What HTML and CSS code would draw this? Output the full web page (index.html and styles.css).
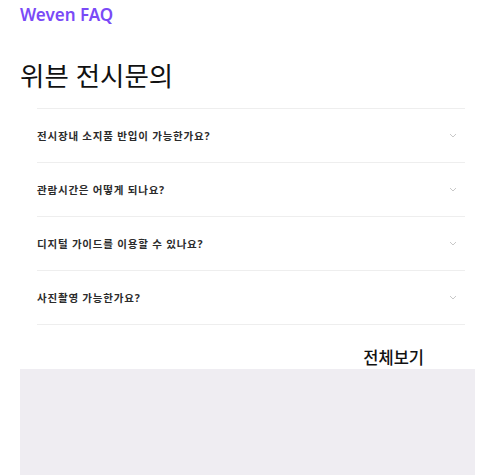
FILE: index.html
```html
<!DOCTYPE html>
<html lang="ko">

<head>
  <meta charset="UTF-8">
  <meta name="viewport" content="width=device-width, initial-scale=1.0">
  <title>Weven FAQ</title>

  <link rel="stylesheet" href="styles.css">
</head>

<body>
  <div class="page">
    <div class="brand">Weven FAQ</div>
    <h1 class="title">위븐 전시문의</h1>

    <ul class="faq-list">
      <li class="faq-item">
        <span>전시장내 소지품 반입이 가능한가요?</span>
        <svg class="chev" width="8" height="5" viewBox="0 0 8 5"><path d="M1 1l3 3 3-3" fill="none" stroke="#c8c8c8" stroke-width="1"/></svg>
      </li>
      <li class="faq-item">
        <span>관람시간은 어떻게 되나요?</span>
        <svg class="chev" width="8" height="5" viewBox="0 0 8 5"><path d="M1 1l3 3 3-3" fill="none" stroke="#c8c8c8" stroke-width="1"/></svg>
      </li>
      <li class="faq-item">
        <span>디지털 가이드를 이용할 수 있나요?</span>
        <svg class="chev" width="8" height="5" viewBox="0 0 8 5"><path d="M1 1l3 3 3-3" fill="none" stroke="#c8c8c8" stroke-width="1"/></svg>
      </li>
      <li class="faq-item">
        <span>사진촬영 가능한가요?</span>
        <svg class="chev" width="8" height="5" viewBox="0 0 8 5"><path d="M1 1l3 3 3-3" fill="none" stroke="#c8c8c8" stroke-width="1"/></svg>
      </li>
    </ul>

    <div class="more">
      <a href="#">전체보기</a>
    </div>

    <div class="panel"></div>
  </div>
</body>

</html>
```

FILE: styles.css
```css
body {
  margin: 0;
  font-family: "Noto Sans", "Noto Sans CJK KR", sans-serif;
  background: #fff;
}

.page {
  padding: 0 20px;
}

.brand {
  color: #7a4af7;
  font-size: 17px;
  font-weight: 600;
  line-height: 20px;
  padding-top: 5px;
}

.title {
  margin: 36px 0 0;
  font-size: 26.5px;
  font-weight: 400;
  line-height: 30px;
  color: #111;
}

.faq-list {
  list-style: none;
  margin: 17px 10px 0 17px;
  padding: 0;
  border-top: 1px solid #eeeeee;
}

.faq-item {
  display: flex;
  align-items: center;
  justify-content: space-between;
  height: 53px;
  border-bottom: 1px solid #eeeeee;
  font-size: 10.5px;
  letter-spacing: 0.8px;
  font-weight: 700;
  color: #2b2b2b;
}

.chev {
  margin-right: 8px;
}

.more {
  display: flex;
  justify-content: flex-end;
  padding: 22px 51px 0 0;
}

.more a {
  color: #111;
  text-decoration: none;
  font-size: 16.5px;
  font-weight: 500;
  line-height: 22px;
}

.panel {
  height: 120px;
  background: #efedf2;
}
```
